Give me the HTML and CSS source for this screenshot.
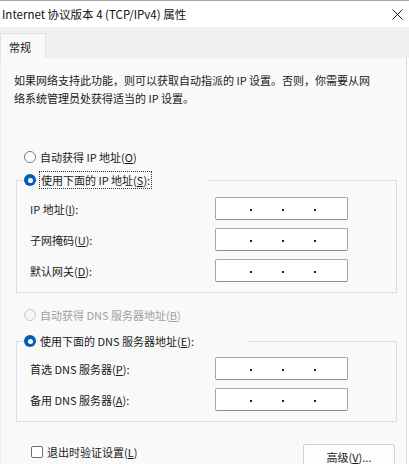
FILE: index.html
```html
<!DOCTYPE html>
<html lang="zh-CN">
<head>
<meta charset="utf-8">
<title>Internet 协议版本 4 (TCP/IPv4) 属性</title>
<link rel="stylesheet" href="styles.css">
</head>
<body>
<div class="window">
  <div class="titlebar">
    <span class="title">Internet 协议版本 4 (TCP/IPv4) 属性</span>
    <svg class="close" width="11" height="11" viewBox="0 0 11 11"><path d="M0.5 0.5 L10.5 10.5 M10.5 0.5 L0.5 10.5" stroke="#222" stroke-width="1" fill="none"/></svg>
  </div>
  <div class="tabstrip">
    <div class="tab">常规</div>
  </div>
  <div class="panel">
    <p class="desc">如果网络支持此功能，则可以获取自动指派的 IP 设置。否则，你需要从网<br>络系统管理员处获得适当的 IP 设置。</p>

    <div class="option first">
      <span class="radio"></span>
      <span class="opt-label">自动获得 IP 地址(<u>O</u>)</span>
    </div>

    <fieldset class="group group-ip">
      <legend class="legend legend-ip">
        <span class="radio checked"></span>
        <span class="opt-label focused">使用下面的 IP 地址(<u>S</u>):</span>
      </legend>
      <div class="rows">
        <div class="row">
          <span class="field-label">IP 地址(<u>I</u>):</span>
          <div class="ipbox"><i></i><i></i><i></i></div>
        </div>
        <div class="row">
          <span class="field-label">子网掩码(<u>U</u>):</span>
          <div class="ipbox"><i></i><i></i><i></i></div>
        </div>
        <div class="row">
          <span class="field-label">默认网关(<u>D</u>):</span>
          <div class="ipbox"><i></i><i></i><i></i></div>
        </div>
      </div>
    </fieldset>

    <div class="option dns-auto disabled">
      <span class="radio"></span>
      <span class="opt-label">自动获得 DNS 服务器地址(<u>B</u>)</span>
    </div>

    <fieldset class="group group-dns">
      <legend class="legend legend-dns">
        <span class="radio checked"></span>
        <span class="opt-label">使用下面的 DNS 服务器地址(<u>E</u>):</span>
      </legend>
      <div class="rows">
        <div class="row">
          <span class="field-label">首选 DNS 服务器(<u>P</u>):</span>
          <div class="ipbox"><i></i><i></i><i></i></div>
        </div>
        <div class="row">
          <span class="field-label">备用 DNS 服务器(<u>A</u>):</span>
          <div class="ipbox"><i></i><i></i><i></i></div>
        </div>
      </div>
    </fieldset>

    <div class="bottom">
      <span class="checkbox"></span>
      <span class="check-label">退出时验证设置(<u>L</u>)</span>
      <button class="btn">高级(<u>V</u>)...</button>
    </div>
  </div>
</div>
</body>
</html>
```
FILE: styles.css
```css
* { box-sizing: border-box; }
html, body {
  margin: 0;
  padding: 0;
  background: #ffffff;
  overflow: hidden;
}
body {
  font-family: "Noto Sans CJK SC", "Noto Sans", sans-serif;
  font-size: 11px;
  color: #1a1a1a;
  width: 409px;
  height: 464px;
}
.window {
  width: 409px;
  height: 464px;
  display: flex;
  flex-direction: column;
}
.titlebar {
  height: 27px;
  flex: none;
  border-top: 1px solid #a8a8a8;
  background: #ffffff;
  display: flex;
  align-items: center;
  padding-left: 2px;
  padding-right: 6px;
}
.title {
  font-size: 11.5px;
  color: #111;
  flex: 1;
}
.close { display: block; }
.tabstrip {
  height: 31px;
  flex: none;
  background: #f0f0f0;
  display: flex;
  align-items: flex-end;
}
.tab {
  width: 46px;
  height: 25px;
  background: #f9f9f9;
  border: 1px solid #e2e2e2;
  border-bottom: none;
  padding: 5px 0 0 8px;
  color: #111;
}
.panel {
  flex: 1;
  width: 407px;
  background: #f9f9f9;
  border-right: 1px solid #dadada;
  border-left: 1px solid #ececec;
  padding: 13px 10px 0 13px;
  display: flex;
  flex-direction: column;
}
.desc {
  margin: 0;
  line-height: 18px;
  color: #1a1a1a;
}
.option {
  height: 20px;
  display: flex;
  align-items: center;
  margin-left: 10px;
}
.option.first { margin-top: 40px; }
.option.dns-auto { margin-top: 12px; }
.radio {
  width: 12px;
  height: 12px;
  border-radius: 50%;
  border: 1px solid #7a7a7a;
  background: #ffffff;
  flex: none;
  margin-right: 4px;
  position: relative;
}
.radio.checked {
  border: none;
  background: #005fb8;
}
.radio.checked::after {
  content: "";
  position: absolute;
  left: 3.5px;
  top: 3.5px;
  width: 5px;
  height: 5px;
  border-radius: 50%;
  background: #ffffff;
}
.disabled { color: #a0a0a0; }
.disabled .radio {
  border-color: #c8c8c8;
  background: #f5f5f5;
}
.opt-label { line-height: 16px; white-space: nowrap; }
.focused {
  outline: 1px dotted #333;
  outline-offset: 0;
  padding: 0 1px;
}
.group {
  margin: 0 0 0 2px;
  padding: 0 0 10px 0;
  border: 1px solid #dcdcdc;
  min-inline-size: 0;
  width: 381px;
}
.group-ip { margin-top: 3px; }
.group-dns { margin-top: 6px; }
.legend {
  padding: 0;
  margin-left: 7px;
  height: 20px;
  display: flex;
  align-items: center;
}
.legend-ip { width: 183px; }
.legend-dns { width: 223px; }
.rows {
  display: flex;
  flex-direction: column;
  gap: 8px;
  padding-left: 13px;
}
.group-ip .rows { margin-top: 7px; }
.group-dns .rows { margin-top: 6px; }
.row {
  height: 23px;
  display: flex;
  align-items: center;
}
.field-label {
  width: 185px;
  flex: none;
}
.ipbox {
  width: 133px;
  height: 23px;
  background: #ffffff;
  border: 1px solid #a6a6a6;
  border-bottom-color: #8c8c8c;
  border-radius: 2px;
  display: flex;
  align-items: center;
  padding: 3px 0 0 34px;
  gap: 30px;
}
.ipbox i {
  display: block;
  width: 2px;
  height: 2px;
  background: #222;
}
.bottom {
  margin-top: 22px;
  display: flex;
  align-items: flex-start;
  padding-left: 17px;
}
.checkbox {
  width: 12px;
  height: 12px;
  border: 1px solid #6e6e6e;
  border-radius: 2px;
  background: #ffffff;
  margin-top: 2px;
  margin-right: 4px;
  flex: none;
}
.check-label {
  line-height: 16px;
}
.btn {
  margin-left: auto;
  margin-right: 1px;
  width: 92px;
  height: 24px;
  background: #fdfdfd;
  border: 1px solid #d0d0d0;
  border-bottom-color: #bdbdbd;
  border-radius: 3px;
  font-family: "Noto Sans CJK SC", "Noto Sans", sans-serif;
  font-size: 11px;
  color: #1a1a1a;
  padding: 2px 0 0 0;
}
```
